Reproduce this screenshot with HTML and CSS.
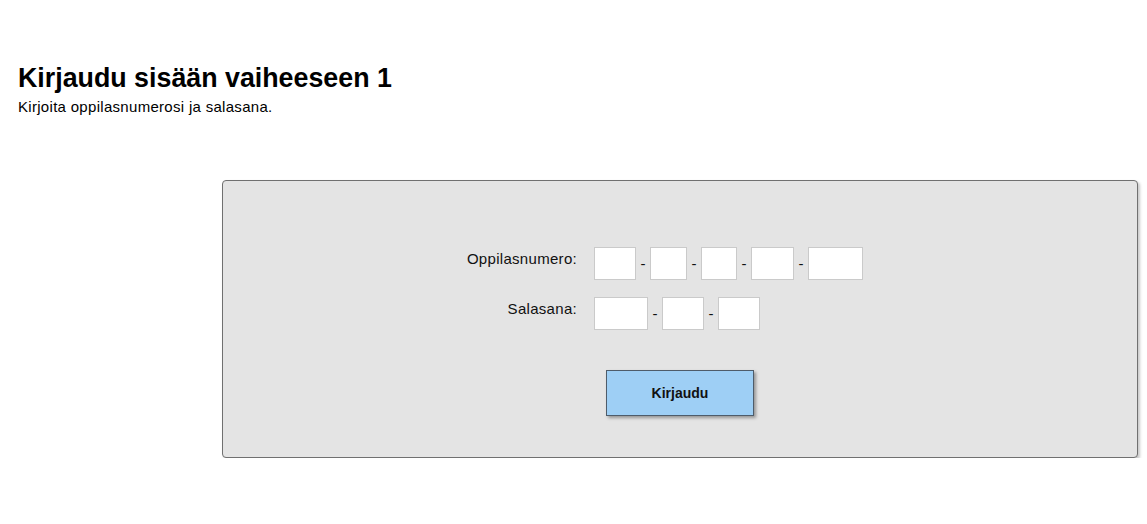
FILE: index.html
```html
<!DOCTYPE html>
<html lang="fi">
<head>
<meta charset="utf-8">
<title>Kirjaudu</title>
<link rel="stylesheet" href="styles.css">
</head>
<body>
<header class="intro">
  <h1 class="title">Kirjaudu sisään vaiheeseen 1</h1>
  <p class="subtitle">Kirjoita oppilasnumerosi ja salasana.</p>
</header>
<main class="panel">
  <form class="login">
    <div class="fields">
      <label class="label">Oppilasnumero:</label>
      <div class="inputs">
        <input class="box w42" type="text">
        <span class="dash">-</span>
        <input class="box w37" type="text">
        <span class="dash">-</span>
        <input class="box w36" type="text">
        <span class="dash">-</span>
        <input class="box w43" type="text">
        <span class="dash">-</span>
        <input class="box w55" type="text">
      </div>
      <label class="label">Salasana:</label>
      <div class="inputs">
        <input class="box w54" type="password">
        <span class="dash">-</span>
        <input class="box w42" type="password">
        <span class="dash">-</span>
        <input class="box w42" type="password">
      </div>
    </div>
    <div class="actions">
      <button class="submit" type="button">Kirjaudu</button>
    </div>
  </form>
</main>
</body>
</html>
```
FILE: styles.css
```css
html, body {
  margin: 0;
  padding: 0;
  background: #ffffff;
  font-family: "Liberation Sans", Arial, sans-serif;
  color: #000;
}

.intro {
  padding: 63px 0 0 18px;
}

.title {
  margin: 0;
  font-size: 26.8px;
  line-height: 31px;
  font-weight: bold;
  color: #000;
}

.subtitle {
  margin: 4px 0 0 0;
  font-size: 15px;
  line-height: 17px;
  letter-spacing: 0.3px;
}

.panel {
  margin: 65px 0 0 222px;
  width: 914px;
  background: #e4e4e4;
  border: 1px solid #707070;
  border-radius: 4px;
  box-shadow: 2px 2px 3px rgba(0, 0, 0, 0.22);
}

.login {
  padding: 66px 0 41px 0;
}

.fields {
  display: grid;
  grid-template-columns: 354px auto;
  column-gap: 17px;
  row-gap: 17px;
}

.label {
  text-align: right;
  font-size: 15px;
  line-height: 17px;
  letter-spacing: 0.3px;
  padding-top: 3px;
  color: #111;
}

.inputs {
  display: flex;
  height: 33px;
}

.box {
  box-sizing: border-box;
  height: 33px;
  margin: 0;
  padding: 0 4px;
  border: 1px solid #cacaca;
  background: #fff;
  font-family: inherit;
  font-size: 14px;
  outline: none;
}

.w36 { width: 36px; }
.w37 { width: 37px; }
.w42 { width: 42px; }
.w43 { width: 43px; }
.w54 { width: 54px; }
.w55 { width: 55px; }

.dash {
  width: 14px;
  text-align: center;
  font-size: 15px;
  line-height: 33px;
  color: #111;
}

.actions {
  display: flex;
  justify-content: center;
  margin-top: 40px;
}

.submit {
  box-sizing: border-box;
  width: 148px;
  height: 46px;
  margin: 0;
  background: #9ecff5;
  border: 1px solid #4e5c6a;
  border-radius: 0;
  box-shadow: 2px 2px 3px rgba(0, 0, 0, 0.35);
  font-family: inherit;
  font-size: 14px;
  font-weight: bold;
  color: #111;
  cursor: pointer;
}
```
